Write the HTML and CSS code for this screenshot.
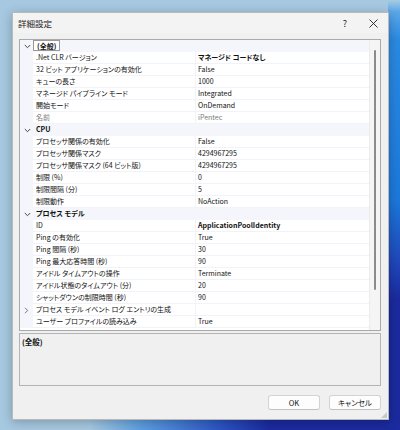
FILE: index.html
```html
<!DOCTYPE html>
<html lang="ja">
<head>
    <meta charset="UTF-8">
    <title>詳細設定</title>
    <link rel="stylesheet" href="styles.css">
</head>
<body>
    <div class="dialog">
        <div class="titlebar">
            <span class="title">詳細設定</span>
            <span class="help">?</span>
            <span class="close">
                <svg width="9" height="9" viewBox="0 0 9 9"><path d="M0.5 0.5 L8.5 8.5 M8.5 0.5 L0.5 8.5" stroke="#222" stroke-width="0.9" fill="none"/></svg>
            </span>
        </div>

        <div class="grid">
            <div class="rows">
                <div class="row cat">
                    <span class="gut"><svg width="7" height="5" viewBox="0 0 7 5"><path d="M0.8 1 L3.5 3.7 L6.2 1" stroke="#444" stroke-width="1" fill="none"/></svg></span>
                    <span class="label"><span class="focus">(全般)</span></span>
                </div>
                <div class="row"><span class="gut"></span><span class="name">.Net CLR バージョン</span><span class="val bold">マネージド コードなし</span></div>
                <div class="row"><span class="gut"></span><span class="name">32 ビット アプリケーションの有効化</span><span class="val">False</span></div>
                <div class="row"><span class="gut"></span><span class="name">キューの長さ</span><span class="val">1000</span></div>
                <div class="row"><span class="gut"></span><span class="name">マネージド パイプライン モード</span><span class="val">Integrated</span></div>
                <div class="row"><span class="gut"></span><span class="name">開始モード</span><span class="val">OnDemand</span></div>
                <div class="row off"><span class="gut"></span><span class="name">名前</span><span class="val">iPentec</span></div>

                <div class="row cat">
                    <span class="gut"><svg width="7" height="5" viewBox="0 0 7 5"><path d="M0.8 1 L3.5 3.7 L6.2 1" stroke="#444" stroke-width="1" fill="none"/></svg></span>
                    <span class="label">CPU</span>
                </div>
                <div class="row"><span class="gut"></span><span class="name">プロセッサ関係の有効化</span><span class="val">False</span></div>
                <div class="row"><span class="gut"></span><span class="name">プロセッサ関係マスク</span><span class="val">4294967295</span></div>
                <div class="row"><span class="gut"></span><span class="name">プロセッサ関係マスク (64 ビット版)</span><span class="val">4294967295</span></div>
                <div class="row"><span class="gut"></span><span class="name">制限 (%)</span><span class="val">0</span></div>
                <div class="row"><span class="gut"></span><span class="name">制限間隔 (分)</span><span class="val">5</span></div>
                <div class="row"><span class="gut"></span><span class="name">制限動作</span><span class="val">NoAction</span></div>

                <div class="row cat">
                    <span class="gut"><svg width="7" height="5" viewBox="0 0 7 5"><path d="M0.8 1 L3.5 3.7 L6.2 1" stroke="#444" stroke-width="1" fill="none"/></svg></span>
                    <span class="label">プロセス モデル</span>
                </div>
                <div class="row"><span class="gut"></span><span class="name">ID</span><span class="val bold">ApplicationPoolIdentity</span></div>
                <div class="row"><span class="gut"></span><span class="name">Ping の有効化</span><span class="val">True</span></div>
                <div class="row"><span class="gut"></span><span class="name">Ping 間隔 (秒)</span><span class="val">30</span></div>
                <div class="row"><span class="gut"></span><span class="name">Ping 最大応答時間 (秒)</span><span class="val">90</span></div>
                <div class="row"><span class="gut"></span><span class="name">アイドル タイムアウトの操作</span><span class="val">Terminate</span></div>
                <div class="row"><span class="gut"></span><span class="name">アイドル状態のタイムアウト (分)</span><span class="val">20</span></div>
                <div class="row"><span class="gut"></span><span class="name">シャットダウンの制限時間 (秒)</span><span class="val">90</span></div>
                <div class="row">
                    <span class="gut"><svg width="5" height="7" viewBox="0 0 5 7"><path d="M1 0.8 L3.7 3.5 L1 6.2" stroke="#666" stroke-width="0.9" fill="none"/></svg></span>
                    <span class="name">プロセス モデル イベント ログ エントリの生成</span><span class="val"></span>
                </div>
                <div class="row"><span class="gut"></span><span class="name">ユーザー プロファイルの読み込み</span><span class="val">True</span></div>
            </div>
            <div class="scroll"><div class="thumb"></div></div>
        </div>

        <div class="desc">
            <b>(全般)</b>
        </div>

        <div class="buttons">
            <button class="btn">OK</button>
            <button class="btn">キャンセル</button>
        </div>
        <div class="grip"></div>
    </div>
</body>
</html>
```

FILE: styles.css
```css
html, body { margin: 0; padding: 0; }
body {
    width: 400px;
    height: 430px;
    overflow: hidden;
    font-family: "Noto Sans CJK JP", "Noto Sans", sans-serif;
    font-size: 7px;
    font-feature-settings: "palt";
    color: #111;
    background:
        linear-gradient(#a8cbe3 0, #5aa7e8 12px, #2a8ae2 40px, #1c78da 200px, #1f45b8 265px, #1b2a9e 300px) right top / 12px 100% no-repeat,
        linear-gradient(to right, #a6c8e0 0, #a6c8e0 90px, #5d9fe0 140px, #2a55c2 220px, #1b2a9e 270px) left bottom / 100% 11px no-repeat,
        #a6c8e0;
    padding-top: 12px;
    box-sizing: border-box;
}

.dialog {
    position: relative;
    margin-left: 12px;
    width: 377px;
    height: 408px;
    box-sizing: border-box;
    background: #f0f0f0;
    border: 1px solid #b9b9b9;
    box-shadow: 0 2px 10px rgba(0, 0, 0, 0.25);
}

.titlebar {
    height: 20px;
    display: flex;
    align-items: center;
    background: #f3f3f3;
}
.title { margin-left: 5px; font-size: 8.5px; color: #222; flex: 1; }
.help { width: 14px; text-align: center; font-size: 9px; margin-right: 14px; color: #222; }
.close { width: 14px; display: flex; justify-content: center; margin-right: 8px; }

.grid {
    margin: 6px 7px 0 6px;
    height: 292px;
    box-sizing: border-box;
    border: 1px solid #a9a9a9;
    background: #fff;
    display: flex;
    overflow: hidden;
}
.rows { flex: 1; }
.row {
    display: grid;
    grid-template-columns: 13px 163px 1fr;
    height: 12px;
    line-height: 11px;
    white-space: nowrap;
}
.gut {
    background: #f4f6fb;
    display: flex;
    align-items: center;
    justify-content: center;
}
.name, .val {
    border-bottom: 1px solid #f1f3f8;
    overflow: hidden;
}
.name { padding-left: 3px; border-right: 1px solid #f1f3f8; }
.val { padding-left: 2px; }
.bold { font-weight: bold; }
.off .name, .off .val { color: #7a7a7a; }

.cat { background: #f4f6fb; }
.cat .gut { justify-content: flex-start; padding-left: 4px; }
.cat .label { grid-column: 2 / 4; font-weight: bold; padding-left: 3px; }
.focus {
    display: inline-block;
    height: 11px;
    line-height: 10px;
    margin-left: -3px;
    padding: 0 3px;
    box-sizing: border-box;
    border: 1px solid #9a9a9a;
    background: #fff;
}

.scroll {
    width: 10px;
    background: #f5f5f5;
    border-left: 1px solid #ececec;
    position: relative;
}
.thumb {
    position: absolute;
    left: 4px;
    top: 10px;
    width: 2px;
    height: 240px;
    border-radius: 1px;
    background: #8b8b8b;
}

.desc {
    margin: 2px 7px 0 6px;
    height: 53px;
    box-sizing: border-box;
    border: 1px solid #b4b4b4;
    padding: 2px 2px;
    line-height: 11px;
    font-size: 7.5px;
}

.buttons {
    display: flex;
    justify-content: flex-end;
    gap: 9px;
    margin: 9px 7px 0 0;
}
.btn {
    font-family: inherit;
    font-size: 7.5px;
    font-feature-settings: "palt";
    width: 52px;
    height: 15px;
    padding: 0;
    background: #fdfdfd;
    border: 1px solid #d3d3d3;
    border-bottom-color: #c2c2c2;
    border-radius: 3px;
    color: #111;
}

.grip {
    position: absolute;
    right: 1px;
    bottom: 1px;
    width: 6px;
    height: 6px;
    background: radial-gradient(circle, #9a9a9a 0.6px, transparent 0.8px) 0 0 / 2px 2px;
    clip-path: polygon(100% 0, 100% 100%, 0 100%);
}
```
